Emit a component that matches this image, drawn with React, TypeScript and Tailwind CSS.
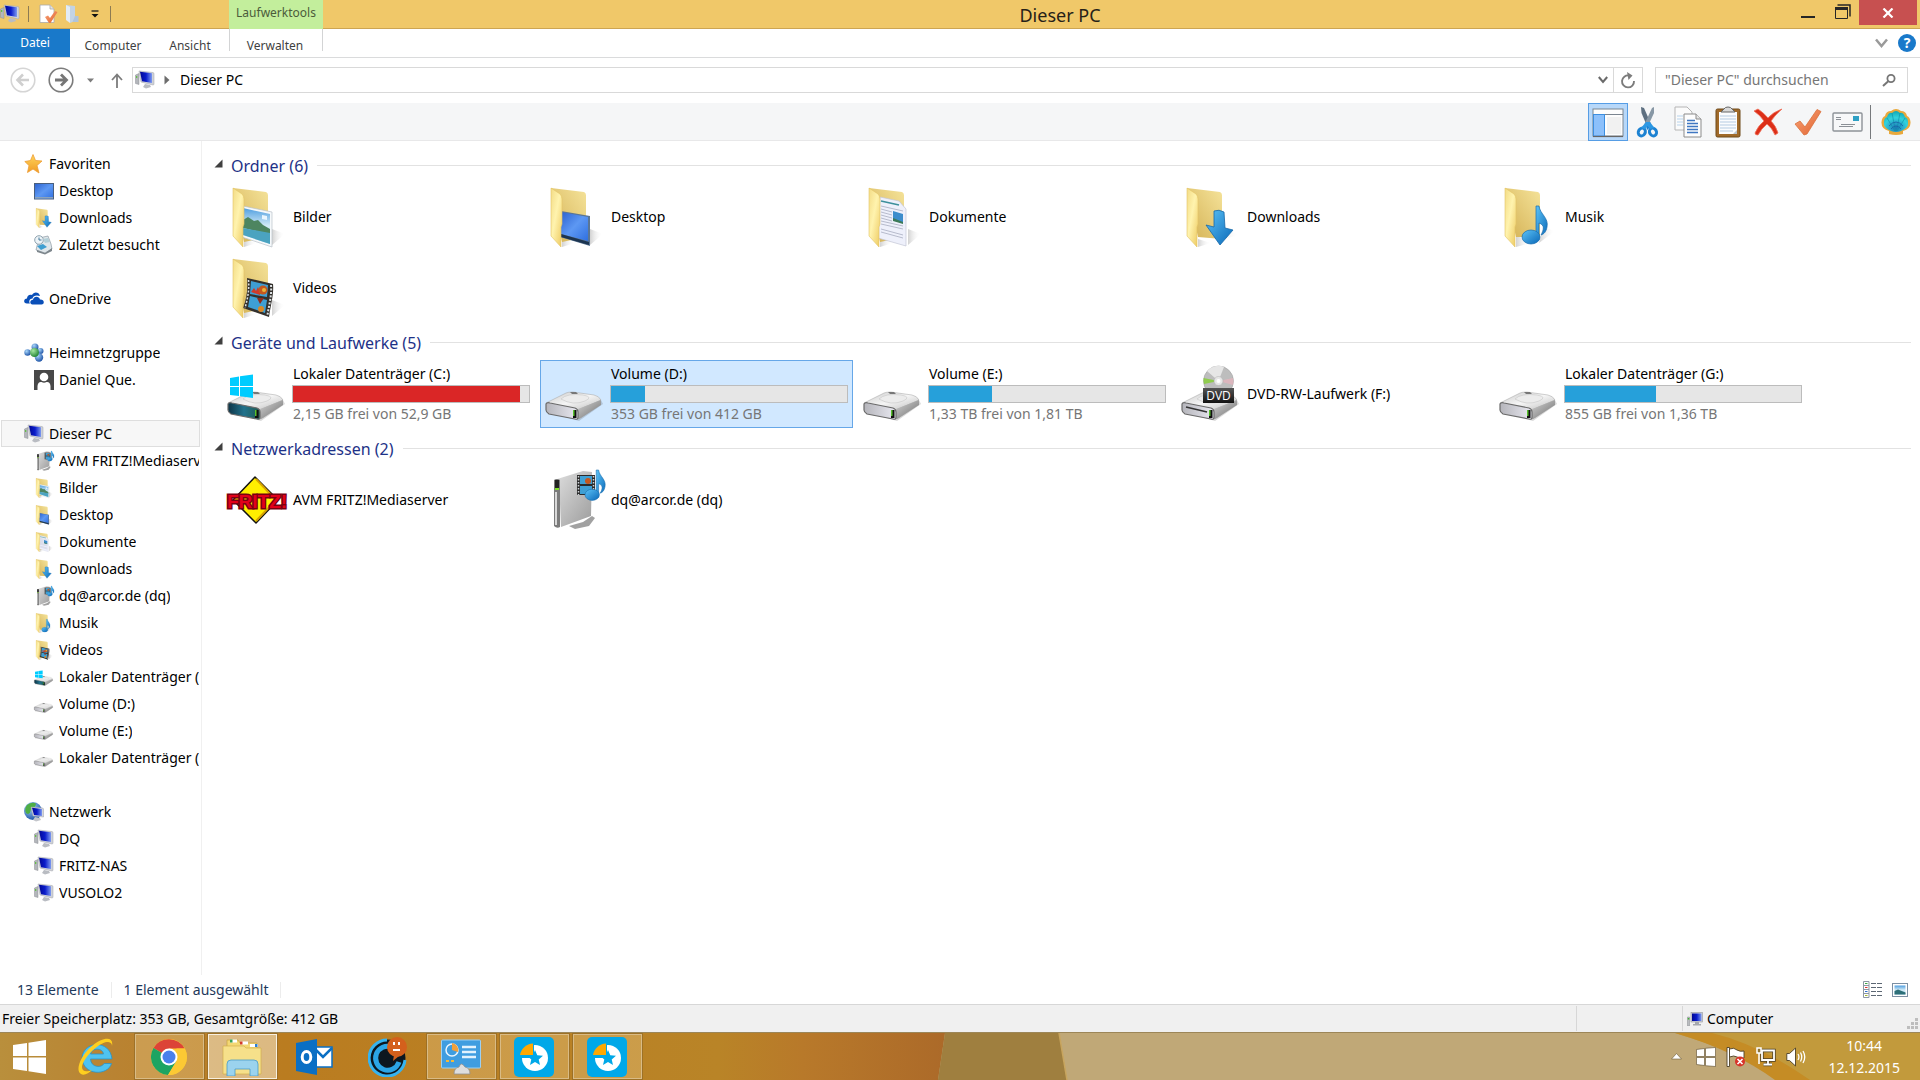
import type { ComponentType, ReactNode } from "react";

interface IconProps {
  size?: number;
}

interface NavEntry {
  label: string;
  icon: ComponentType<IconProps>;
  active?: boolean;
}

interface NavGroup extends NavEntry {
  children: NavEntry[];
}

interface FileEntry {
  label: string;
  icon: ComponentType<IconProps>;
  info?: string;
  used?: number;
  full?: boolean;
  selected?: boolean;
}

function Svg({ size = 60, box = 60, children }: { size?: number; box?: number; children: ReactNode }) {
  return (
    <svg width={size} height={size} viewBox={`0 0 ${box} ${box}`} className="shrink-0 overflow-visible" aria-hidden="true">
      {children}
    </svg>
  );
}

// Gradients shared by all icons
function IconDefs() {
  return (
    <svg width="0" height="0" className="absolute" aria-hidden="true">
      <defs>
        <linearGradient id="flap" x1="0" y1="0" x2="1" y2="1">
          <stop offset="0" stopColor="#f3dc86" />
          <stop offset="0.45" stopColor="#fff3ae" />
          <stop offset="1" stopColor="#edc95f" />
        </linearGradient>
        <linearGradient id="back" x1="1" y1="0" x2="0" y2="1">
          <stop offset="0" stopColor="#f5e39a" />
          <stop offset="1" stopColor="#d3b052" />
        </linearGradient>
        <linearGradient id="shade" x1="0" y1="0" x2="1" y2="0">
          <stop offset="0" stopColor="#9a9a9a" stopOpacity="0.45" />
          <stop offset="1" stopColor="#fff" stopOpacity="0" />
        </linearGradient>
        <linearGradient id="sky" x1="0" y1="0" x2="0" y2="1">
          <stop offset="0" stopColor="#4f9ee0" />
          <stop offset="0.5" stopColor="#d4ecf7" />
          <stop offset="1" stopColor="#a9d6ee" />
        </linearGradient>
        <linearGradient id="screen" x1="0" y1="0" x2="1" y2="1">
          <stop offset="0" stopColor="#2c62cf" />
          <stop offset="0.5" stopColor="#5d98f3" />
          <stop offset="1" stopColor="#2f6fe0" />
        </linearGradient>
        <linearGradient id="blue" x1="0" y1="0" x2="1" y2="1">
          <stop offset="0" stopColor="#5cc3f7" />
          <stop offset="1" stopColor="#0a68b8" />
        </linearGradient>
        <linearGradient id="top" x1="0" y1="0" x2="1" y2="1">
          <stop offset="0" stopColor="#c9c9c9" />
          <stop offset="0.5" stopColor="#f5f5f5" />
          <stop offset="1" stopColor="#bdbdbd" />
        </linearGradient>
        <linearGradient id="side" x1="0" y1="0" x2="1" y2="1">
          <stop offset="0" stopColor="#d8d8d8" />
          <stop offset="1" stopColor="#6e6e6e" />
        </linearGradient>
        <linearGradient id="front" x1="0" y1="0" x2="1" y2="0">
          <stop offset="0" stopColor="#b5b5bb" />
          <stop offset="1" stopColor="#e9e9f1" />
        </linearGradient>
        <linearGradient id="teal" x1="0" y1="0" x2="1" y2="0">
          <stop offset="0" stopColor="#0d3346" />
          <stop offset="0.5" stopColor="#21728c" />
          <stop offset="1" stopColor="#1e5b50" />
        </linearGradient>
        <linearGradient id="navy" x1="0" y1="0" x2="1" y2="0">
          <stop offset="0" stopColor="#020894" />
          <stop offset="0.5" stopColor="#0a1ccb" />
          <stop offset="1" stopColor="#7d9af0" />
        </linearGradient>
        <linearGradient id="black" x1="0" y1="0" x2="0" y2="1">
          <stop offset="0" stopColor="#555" />
          <stop offset="1" stopColor="#111" />
        </linearGradient>
        <linearGradient id="orange" x1="0" y1="0" x2="1" y2="1">
          <stop offset="0" stopColor="#f9a57a" />
          <stop offset="1" stopColor="#e0622e" />
        </linearGradient>
        <linearGradient id="gold" x1="0" y1="0" x2="0" y2="1">
          <stop offset="0" stopColor="#ffd65c" />
          <stop offset="1" stopColor="#f09a24" />
        </linearGradient>
        <linearGradient id="tower" x1="0" y1="0" x2="1" y2="1">
          <stop offset="0" stopColor="#e0e0e0" />
          <stop offset="1" stopColor="#9c9c9c" />
        </linearGradient>
        <radialGradient id="globe" cx="0.35" cy="0.3" r="0.8">
          <stop offset="0" stopColor="#a9d7fb" />
          <stop offset="1" stopColor="#12489f" />
        </radialGradient>
        <radialGradient id="green" cx="0.35" cy="0.3" r="0.8">
          <stop offset="0" stopColor="#a6e8a2" />
          <stop offset="1" stopColor="#167c2b" />
        </radialGradient>
        <radialGradient id="shell" cx="0.5" cy="0.8" r="0.8">
          <stop offset="0" stopColor="#1d77b8" />
          <stop offset="0.6" stopColor="#32d3dc" />
          <stop offset="1" stopColor="#0fa6b4" />
        </radialGradient>
        <linearGradient id="taskLeft" x1="0" y1="0" x2="1" y2="0">
          <stop offset="0" stopColor="#b98f3c" />
          <stop offset="0.12" stopColor="#b98332" />
          <stop offset="0.3" stopColor="#ba7c20" />
          <stop offset="0.76" stopColor="#b98427" />
          <stop offset="0.85" stopColor="#b8792a" />
          <stop offset="1" stopColor="#ac6a29" />
        </linearGradient>
      </defs>
    </svg>
  );
}

function FolderBase({ size, children }: { size?: number; children?: ReactNode }) {
  return (
    <Svg size={size}>
      <path d="M45 58 L58 47 L45 42Z" fill="url(#shade)" />
      <path d="M17 52 L30 56 L17 60Z" fill="url(#shade)" />
      <path d="M6 1 L39 5 Q41 6 41 8 V50 L17 55Z" fill="url(#back)" />
      {children}
      <path d="M6 1 L15 7 Q17 9 17 12 V37 L16 40 V60 L6 49Z" fill="url(#flap)" stroke="#e3c464" strokeWidth="0.6" />
    </Svg>
  );
}

function PicturesIcon({ size }: IconProps) {
  return (
    <FolderBase size={size}>
      <path d="M16 19 L45 25 V60 L15 50Z" fill="#f6f9fb" stroke="#b9c2c8" strokeWidth="0.7" />
      <path d="M16 21 L43 27 V57 L16 48Z" fill="url(#sky)" />
      <path d="M16 33 L21 30 L27 34 L31 33 L36 38 L43 42 V47 L16 41Z" fill="#4d8560" />
      <path d="M16 41 L43 46 V57 L16 48Z" fill="#4ba3c0" />
      <path d="M35 28 l5 1 v4 l-5 -1z" fill="#e9f6ff" />
    </FolderBase>
  );
}

function DesktopFolderIcon({ size }: IconProps) {
  return (
    <FolderBase size={size}>
      <path d="M16 24 L45 29 V59 L15 50Z" fill="#5b7694" />
      <path d="M16 25 L43 30 V54 L16 47Z" fill="url(#screen)" />
      <path d="M16 47 L44 55 V58 L16 50Z" fill="#1c3450" />
    </FolderBase>
  );
}

function DocumentsIcon({ size }: IconProps) {
  return (
    <FolderBase size={size}>
      <path d="M17 10 L36 14 L43 22 V59 L15 51Z" fill="#eef0fb" stroke="#c3c6d6" strokeWidth="0.7" />
      <path d="M18 14 L36 18" stroke="#3c8f9b" strokeWidth="1.6" />
      <path
        d="M18 19l22 5M18 22l11 3M18 25l11 3M18 28l11 3M18 31l11 3M18 34l22 5M18 37l22 5M18 42l22 6M18 45l22 6"
        stroke="#b0b4c6"
        strokeWidth="0.9"
      />
      <path d="M30 24 l10 3 v9 l-10 -3z" fill="#3d8dcc" />
      <path d="M30 31 l10 4 v2 l-10 -3z" fill="#3d7a58" />
    </FolderBase>
  );
}

function DownloadsIcon({ size }: IconProps) {
  return (
    <Svg size={size}>
      <path d="M36 54 L58 48 L45 42Z" fill="url(#shade)" />
      <path d="M17 52 L30 56 L17 60Z" fill="url(#shade)" />
      <path d="M6 1 L39 5 Q41 6 41 8 V52 L17 50Z" fill="url(#back)" />
      <path d="M6 1 L15 7 Q17 9 17 12 V37 L16 40 V60 L6 49Z" fill="url(#flap)" stroke="#e3c464" strokeWidth="0.6" />
      <path d="M33 24 Q38 22 43 25 L44 41 L52 43 L39 58 L25 38 L33 40Z" fill="url(#blue)" stroke="#1668a8" strokeWidth="0.8" />
    </Svg>
  );
}

function Note({ x = 0, y = 0 }: { x?: number; y?: number }) {
  return (
    <g transform={`translate(${x} ${y})`}>
      <path d="M14 0 H17 C18 8 27 12 25 21 C24 26 22 28 19 29 C22 24 23 19 17 17 V34 H14Z" fill="url(#blue)" stroke="#176bad" strokeWidth="0.7" />
      <ellipse cx="9" cy="31" rx="9" ry="7" fill="url(#blue)" stroke="#176bad" strokeWidth="0.7" />
    </g>
  );
}

function MusicIcon({ size }: IconProps) {
  return (
    <Svg size={size}>
      <path d="M40 56 L56 44 L44 40Z" fill="url(#shade)" />
      <path d="M17 48 L32 56 L17 60Z" fill="url(#shade)" />
      <path d="M6 1 L39 5 Q41 6 41 8 V50 L17 50Z" fill="url(#back)" />
      <path d="M6 1 L15 7 Q17 9 17 12 V37 L16 40 V60 L6 49Z" fill="url(#flap)" stroke="#e3c464" strokeWidth="0.6" />
      <Note x={23} y={19} />
    </Svg>
  );
}

function Film() {
  return (
    <>
      <path d="M20 20 L46 26 C47 36 44 46 42 59 L16 50 C20 40 21 30 20 20Z" fill="#33302c" />
      <path d="M24 23 L41 27 L40 39 L23 36Z" fill="#3e9fd4" />
      <path d="M23 38 L40 42 L38 55 L21 49Z" fill="#3e9fd4" />
      <path d="M24 34 l3 -4 2 3 2 -4 2 5 v3z" fill="#cf3a2b" />
      <circle cx="36" cy="32" r="4.5" fill="#c5571e" />
      <circle cx="37" cy="32" r="2" fill="#e9b53a" />
      <path d="M30 40 h7 l-4 6z" fill="#8c2c1c" />
      <circle cx="34" cy="51" r="3" fill="#d98826" />
      <path d="M44 27 C45 37 42 47 40.5 57" stroke="#dfe3e6" strokeWidth="2" strokeDasharray="2 1.5" fill="none" />
      <path d="M21.5 22 C22.5 32 20.5 41 18 50" stroke="#dfe3e6" strokeWidth="1.5" strokeDasharray="2 1.5" fill="none" />
    </>
  );
}

function VideosIcon({ size }: IconProps) {
  return (
    <FolderBase size={size}>
      <Film />
    </FolderBase>
  );
}

function DriveBody({ front = "url(#front)" }: { front?: string }) {
  return (
    <>
      <path d="M6 49 L34 57 L58 40 L56 36Z" fill="#000" opacity="0.15" />
      <path d="M1 39 L21 29 Q23 28 28 28 L49 31 Q54 32 56 36 L33 46 L2 41Z" fill="url(#top)" stroke="#a2a2a2" strokeWidth="0.5" />
      <path d="M16 35 Q22 29 38 31 Q49 33 40 37 Q28 42 16 35Z" fill="#ececec" stroke="#bfbfbf" strokeWidth="0.5" />
      <path d="M25 28 l6 0 2 2 -6 0z" fill="#777" />
      <path d="M33 45 L56 36 V41 L36 54 Q33 56 31 55Z" fill="url(#side)" />
      <path d="M1 40 Q2 38 5 39 L30 44 Q33 45 33 48 V53 Q33 56 30 55 L4 50 Q1 48 1 46Z" fill={front} stroke="#6b6b6b" strokeWidth="1.2" />
      <rect x="28" y="46" width="3.5" height="8" fill="#111" />
      <rect x="28" y="46" width="1.5" height="6" fill="#58c22c" />
    </>
  );
}

function DriveIcon({ size }: IconProps) {
  return (
    <Svg size={size}>
      <DriveBody />
    </Svg>
  );
}

function SystemDriveIcon({ size }: IconProps) {
  return (
    <Svg size={size}>
      <DriveBody front="url(#teal)" />
      <path d="M3 14 L12 12.500 V22 H3Z M13 12.300 L26 10.500 V22 H13Z M3 23 H12 V32 L3 31Z M13 23 H26 V34 L13 32.300Z" fill="#00ccff" />
    </Svg>
  );
}

function DvdIcon({ size }: IconProps) {
  return (
    <Svg size={size}>
      <DriveBody />
      <path d="M5 43 L26 48" stroke="#333" strokeWidth="1.5" />
      <circle cx="37.5" cy="17" r="15" fill="#bdbdbd" stroke="#999" strokeWidth="0.5" />
      <path d="M37.5 17 L26 7 A15 15 0 0 1 43 3Z" fill="#e6e6e6" />
      <path d="M37.5 17 L23 20 A15 15 0 0 1 22.500 14Z" fill="#7ed321" opacity="0.7" />
      <path d="M37.5 17 L52 14 A15 15 0 0 1 52 21Z" fill="#e8b3bd" opacity="0.7" />
      <circle cx="37.5" cy="17" r="4.5" fill="#e6e6e6" stroke="#aaa" strokeWidth="0.5" />
      <circle cx="37.5" cy="17" r="2" fill="#fff" />
      <rect x="22" y="24" width="31" height="15" fill="url(#black)" />
      <text x="37.5" y="36" textAnchor="middle" fontSize="12" fill="#fff" fontFamily="Open Sans, sans-serif">
        DVD
      </text>
    </Svg>
  );
}

function FritzIcon({ size }: IconProps) {
  return (
    <Svg size={size}>
      <path d="M28 7 L51 30 L29 53 L6 30Z" fill="#ffee00" stroke="#111" strokeWidth="1.5" strokeLinejoin="round" />
      <path d="M29 9 L49 30 L29 51" fill="none" stroke="#d8a400" strokeWidth="2" />
      <text
        x="30"
        y="38"
        textAnchor="middle"
        fontSize="19"
        fontWeight="700"
        fill="#e2001a"
        stroke="#7a0010"
        strokeWidth="3"
        paintOrder="stroke"
        fontFamily="Liberation Sans, sans-serif"
      >
        FRITZ!
      </text>
    </Svg>
  );
}

function MediaServerIcon({ size }: IconProps) {
  return (
    <Svg size={size}>
      <path d="M24 56 L38 52 L47 46 L50 48 L44 56 L30 59Z" fill="#8a8a8a" opacity="0.8" />
      <path d="M9 10 L38 1 L47 2 L46 46 L16 57 L14 10Z" fill="url(#tower)" />
      <path d="M9 10 Q12 8 15 10 V57 Q12 59 9 56Z" fill="#7b7b7b" />
      <path d="M11 22 V55" stroke="#d9d9d9" strokeWidth="2" />
      <rect x="10" y="10" width="4" height="8" fill="#222" />
      <rect x="10" y="18" width="4" height="2" fill="#7ee02a" />
      <rect x="32" y="5" width="18" height="20" fill="#2b2b2b" />
      <rect x="35" y="6" width="12" height="8" fill="#3e9fd4" />
      <rect x="35" y="16" width="12" height="8" fill="#3e9fd4" />
      <circle cx="43" cy="11" r="3" fill="#c5571e" />
      <path d="M33.5 6 V25 M48.5 6 V25" stroke="#cfd4d8" strokeWidth="1.5" strokeDasharray="1.5 1.5" />
      <g transform="translate(40 0) scale(0.8)">
        <Note />
      </g>
    </Svg>
  );
}

function ComputerIcon({ size = 20 }: IconProps) {
  return (
    <Svg size={size} box={20}>
      <path d="M0.500 5 L4 3.500 V14.500 L0.500 13.500Z" fill="#b3b6bb" stroke="#8d8f94" strokeWidth="0.5" />
      <rect x="1.200" y="6" width="1" height="2" fill="#53c02c" />
      <path d="M4 1 L18 2.500 Q19 2.500 19 4 V14 Q19 15 18 15 L6 12Z" fill="#cfd2d8" stroke="#9ea1a8" strokeWidth="0.5" />
      <path d="M5 1.800 L17 3.300 V13 L7 11.300Z" fill="url(#navy)" />
      <path d="M10 14 L15 15 L16 17 L11 18.500 L8 17Z" fill="#b9bcc2" />
    </Svg>
  );
}

function StarIcon({ size = 20 }: IconProps) {
  return (
    <Svg size={size} box={20}>
      <path d="M9 0.500 L11.500 6.500 L18 7 L13 11.500 L15 19 L9 15 L3.500 18.500 L5 11.500 L0.800 7.500 L6.500 6.500Z" fill="url(#gold)" stroke="#ee9d35" strokeWidth="0.8" />
    </Svg>
  );
}

function DesktopIcon({ size = 20 }: IconProps) {
  return (
    <Svg size={size} box={20}>
      <rect x="0.5" y="2.5" width="19" height="15.5" fill="url(#screen)" stroke="#4a5f7e" />
      <rect x="1" y="16" width="18" height="1.5" fill="#8aa3bd" />
    </Svg>
  );
}

function RecentIcon({ size = 20 }: IconProps) {
  return (
    <Svg size={size} box={20}>
      <path d="M5 3 L14 1 L17 9 L18 14 L11 18 L2 15Z" fill="#dfe6ea" stroke="#8d9aa3" strokeWidth="0.7" />
      <circle cx="5" cy="5" r="4.3" fill="#edf4f8" stroke="#8fa3b0" />
      <path d="M5 2.500 V5 H7.500" stroke="#44789b" fill="none" />
      <path d="M9 4 l5 -1 2 4 -5 1z" fill="#b3cfd8" />
      <path d="M3 11 l6 -2 4 3 -6 3z" fill="#3f9ed0" />
      <path d="M3 15 L11 18 L18 13 L18 16 L11 19.500 L3 17Z" fill="#7d868c" />
    </Svg>
  );
}

function OneDriveIcon({ size = 20 }: IconProps) {
  return (
    <Svg size={size} box={20}>
      <path d="M6 14.500 H3 C-1 14.500 -0.500 9.500 3 9.500 C3 6 6 5 8 6 C9.500 2.500 15 2.500 16 7 C12 5.500 9 7 8.500 9.500 C5.500 9.500 4.500 12.500 6 14.500Z" fill="#0a4fb8" />
      <path d="M8.500 15.500 C5.500 15.500 5.500 10.800 9 10.800 C9.500 7 15 6.500 16 10.500 C20.500 10 21 15.500 17.500 15.500Z" fill="#0a4fb8" />
    </Svg>
  );
}

function HomegroupIcon({ size = 20 }: IconProps) {
  return (
    <Svg size={size} box={20}>
      <circle cx="3.5" cy="9.5" r="3.2" fill="url(#globe)" />
      <circle cx="11" cy="4" r="3.5" fill="url(#globe)" />
      <circle cx="16.5" cy="8" r="3" fill="url(#globe)" />
      <circle cx="15" cy="14.5" r="4.2" fill="url(#globe)" />
      <circle cx="10.5" cy="9.5" r="4.5" fill="url(#green)" />
    </Svg>
  );
}

function UserIcon({ size = 20 }: IconProps) {
  return (
    <Svg size={size} box={20}>
      <rect width="20" height="20" fill="#484848" />
      <circle cx="10" cy="7" r="4.3" fill="#fff" />
      <path d="M3.500 20 V16 Q4 11.500 7.500 12 Q10 13.500 12.500 12 Q16 11.500 16.500 16 V20Z" fill="#fff" />
    </Svg>
  );
}

function NetworkIcon({ size = 20 }: IconProps) {
  return (
    <Svg size={size} box={20}>
      <circle cx="9" cy="9" r="9" fill="url(#globe)" />
      <path d="M3 3 Q8 -0.500 12 1.500 Q12 5 7 7 Q6 14 2 11 Q0 7 3 3Z" fill="#4fae45" />
      <path d="M7 5 L18 6 Q19.500 6 19.500 7 V15 L9 14Z" fill="#d6d8dd" stroke="#9ea1a8" strokeWidth="0.5" />
      <path d="M8 5.800 L18 7 V14 L10 13Z" fill="url(#navy)" />
      <path d="M11 15 L16 16 L17 18 L12 19.500 L9 18Z" fill="#c3c5ca" />
    </Svg>
  );
}

const NAV: NavGroup[] = [
  {
    label: "Favoriten",
    icon: StarIcon,
    children: [
      { label: "Desktop", icon: DesktopIcon },
      { label: "Downloads", icon: DownloadsIcon },
      { label: "Zuletzt besucht", icon: RecentIcon },
    ],
  },
  { label: "OneDrive", icon: OneDriveIcon, children: [] },
  {
    label: "Heimnetzgruppe",
    icon: HomegroupIcon,
    children: [{ label: "Daniel Que.", icon: UserIcon }],
  },
  {
    label: "Dieser PC",
    icon: ComputerIcon,
    active: true,
    children: [
      { label: "AVM FRITZ!Mediaserver", icon: MediaServerIcon },
      { label: "Bilder", icon: PicturesIcon },
      { label: "Desktop", icon: DesktopFolderIcon },
      { label: "Dokumente", icon: DocumentsIcon },
      { label: "Downloads", icon: DownloadsIcon },
      { label: "dq@arcor.de (dq)", icon: MediaServerIcon },
      { label: "Musik", icon: MusicIcon },
      { label: "Videos", icon: VideosIcon },
      { label: "Lokaler Datenträger (C:)", icon: SystemDriveIcon },
      { label: "Volume (D:)", icon: DriveIcon },
      { label: "Volume (E:)", icon: DriveIcon },
      { label: "Lokaler Datenträger (G:)", icon: DriveIcon },
    ],
  },
  {
    label: "Netzwerk",
    icon: NetworkIcon,
    children: [
      { label: "DQ", icon: ComputerIcon },
      { label: "FRITZ-NAS", icon: ComputerIcon },
      { label: "VUSOLO2", icon: ComputerIcon },
    ],
  },
];

const SECTIONS: { title: string; items: FileEntry[] }[] = [
  {
    title: "Ordner",
    items: [
      { label: "Bilder", icon: PicturesIcon },
      { label: "Desktop", icon: DesktopFolderIcon },
      { label: "Dokumente", icon: DocumentsIcon },
      { label: "Downloads", icon: DownloadsIcon },
      { label: "Musik", icon: MusicIcon },
      { label: "Videos", icon: VideosIcon },
    ],
  },
  {
    title: "Geräte und Laufwerke",
    items: [
      { label: "Lokaler Datenträger (C:)", icon: SystemDriveIcon, info: "2,15 GB frei von 52,9 GB", used: 96, full: true },
      { label: "Volume (D:)", icon: DriveIcon, info: "353 GB frei von 412 GB", used: 14.3, selected: true },
      { label: "Volume (E:)", icon: DriveIcon, info: "1,33 TB frei von 1,81 TB", used: 26.5 },
      { label: "DVD-RW-Laufwerk (F:)", icon: DvdIcon },
      { label: "Lokaler Datenträger (G:)", icon: DriveIcon, info: "855 GB frei von 1,36 TB", used: 38.6 },
    ],
  },
  {
    title: "Netzwerkadressen",
    items: [
      { label: "AVM FRITZ!Mediaserver", icon: FritzIcon },
      { label: "dq@arcor.de (dq)", icon: MediaServerIcon },
    ],
  },
];

function TitleBar() {
  return (
    <header className="flex h-[29px] border-b border-[#cda552] bg-[#f0c869]">
      <div className="flex w-[229px] items-center">
        <ComputerIcon />
        <span className="ml-2 h-4 w-px bg-[#8d7b52]" />
        <button aria-label="Eigenschaften" className="ml-[10px]">
          <Svg size={20} box={20}>
            <path d="M1 1 H11 L15 5 V18.500 H1Z" fill="#fff" stroke="#a9a9a9" strokeWidth="0.8" />
            <path d="M11 1 V5 H15" fill="#e4e4e4" stroke="#a9a9a9" strokeWidth="0.8" />
            <path d="M6 13 L9 11.500 L11 14 L16 7 L18.500 8 L11.500 19 H10Z" fill="url(#orange)" />
          </Svg>
        </button>
        <button aria-label="Neuer Ordner" className="ml-[6px]">
          <Svg size={20} box={20}>
            <path d="M1 1 L10 2 V17 L5 19Z" fill="#c3d3e4" />
            <path d="M1 1 L5 3 V19 L1 16Z" fill="#e2ecf6" />
            <path d="M10 12 h3.500 v6 h-6z" fill="#b1c4d9" />
          </Svg>
        </button>
        <button aria-label="Symbolleiste anpassen" className="ml-[6px]">
          <svg width="8" height="8" viewBox="0 0 8 8">
            <path d="M0.500 1 H7.500" stroke="#111" strokeWidth="1.2" />
            <path d="M0.500 4 H7.500 L4 7.500Z" fill="#111" />
          </svg>
        </button>
        <span className="ml-[11px] h-4 w-px bg-[#8d7b52]" />
      </div>
      <div className="h-[29px] w-[94px] bg-[#c3ee9c] text-center text-xs leading-[25px] text-[#4b5c3b]">Laufwerktools</div>
      <h1 className="flex-1 text-center text-lg leading-[30px] text-[#262118]">Dieser PC</h1>
      <div className="flex pr-[3px]">
        <button aria-label="Minimieren" className="flex w-[30px] justify-start pt-4 pl-1">
          <span className="block h-[2px] w-[14px] bg-[#262626]" />
        </button>
        <button aria-label="Verkleinern" className="flex w-8 justify-center pt-1">
          <svg width="16" height="16" viewBox="0 0 16 16">
            <path d="M2.500 1 H15 V12.500" fill="none" stroke="#262626" strokeWidth="1.5" />
            <path d="M0.500 4 H12.500 V14.500 H0.500Z" fill="none" stroke="#262626" />
            <path d="M0 4.500 H13" stroke="#262626" strokeWidth="3" />
          </svg>
        </button>
        <button aria-label="Schließen" className="flex h-[25px] w-[58px] items-center justify-center bg-[#c75050]">
          <svg width="12" height="10" viewBox="0 0 12 10">
            <path d="M1.500 0.500 L10.500 9.500 M10.500 0.500 L1.500 9.500" stroke="#fff" strokeWidth="2.2" />
          </svg>
        </button>
      </div>
    </header>
  );
}

function Ribbon() {
  return (
    <nav className="flex h-[29px] border-b border-[#dadbdc] text-xs text-[#3f3f3f]">
      <button className="w-[70px] bg-[#1979ca] text-white">Datei</button>
      <button className="w-[86px] pt-[5px]">Computer</button>
      <button className="w-[68px] pt-[5px]">Ansicht</button>
      <div className="ml-[5px] flex h-[22px] w-[94px] border-x border-[#d3d4d5]">
        <button className="h-[29px] w-full pt-[5px] pr-[2px]">Verwalten</button>
      </div>
      <div className="ml-auto flex items-center gap-[10px] pr-1">
        <button aria-label="Menüband erweitern">
          <svg width="13" height="10" viewBox="0 0 13 10">
            <path d="M1 1.500 L6.500 8 L12 1.500" fill="none" stroke="#9a9a9a" strokeWidth="2.5" />
          </svg>
        </button>
        <button aria-label="Hilfe" className="h-[18px] w-[18px] rounded-full bg-[#1979ca] text-sm leading-[18px] font-bold text-white">
          ?
        </button>
      </div>
    </nav>
  );
}

function AddressRow() {
  return (
    <div className="flex h-[45px] items-center pr-3 pb-px pl-[10px]">
      <button aria-label="Zurück">
        <svg width="26" height="26" viewBox="0 0 26 26">
          <circle cx="13" cy="13" r="11.8" fill="none" stroke="#d5d5d5" strokeWidth="1.6" />
          <path d="M19 13 H8 M13 7.500 L7.500 13 L13 18.500" fill="none" stroke="#cfcfcf" strokeWidth="2.6" />
        </svg>
      </button>
      <button aria-label="Vorwärts" className="ml-3">
        <svg width="26" height="26" viewBox="0 0 26 26">
          <circle cx="13" cy="13" r="11.8" fill="none" stroke="#7c7c7c" strokeWidth="1.6" />
          <path d="M7 13 H18 M13 7.500 L18.500 13 L13 18.500" fill="none" stroke="#767676" strokeWidth="2.8" />
        </svg>
      </button>
      <button aria-label="Zuletzt besuchte Orte" className="ml-3">
        <svg width="9" height="5" viewBox="0 0 9 5">
          <path d="M1 0.500 H8 L4.500 4.500Z" fill="#7c7c7c" />
        </svg>
      </button>
      <button aria-label="Nach oben" className="ml-4">
        <svg width="12" height="15" viewBox="0 0 12 15">
          <path d="M6 15 V2 M1 7 L6 1.500 L11 7" fill="none" stroke="#7c7c7c" strokeWidth="1.8" />
        </svg>
      </button>
      <div className="ml-[9px] flex h-[26px] flex-1 items-center border border-[#d9d9d9] pl-[2px]">
        <ComputerIcon />
        <svg width="6" height="10" viewBox="0 0 6 10" className="ml-[9px]">
          <path d="M0.500 0.500 L5.500 5 L0.500 9.500Z" fill="#6d6d6d" />
        </svg>
        <a href="#pc" className="ml-[10px] text-sm leading-5">
          Dieser PC
        </a>
        <button aria-label="Vorherige Orte" className="mr-[5px] ml-auto">
          <svg width="10" height="8" viewBox="0 0 10 8">
            <path d="M0.800 1 L5 6 L9.200 1" fill="none" stroke="#6a6a6a" strokeWidth="2" />
          </svg>
        </button>
        <button aria-label="Aktualisieren" className="flex h-6 w-[29px] items-center justify-center border-l border-[#d9d9d9]">
          <svg width="16" height="17" viewBox="0 0 16 17">
            <path d="M9 3.500 A6 6 0 1 0 14 9" fill="none" stroke="#7c7c7c" strokeWidth="1.9" />
            <path d="M7 0 L12.500 3.500 L8.500 8Z" fill="#7c7c7c" />
          </svg>
        </button>
      </div>
      <label className="ml-3 flex h-[26px] w-[253px] items-center border border-[#d9d9d9] pr-[11px] pl-[9px]">
        <input
          type="text"
          aria-label="Dieser PC durchsuchen"
          placeholder={'"Dieser PC" durchsuchen'}
          className="min-w-0 flex-1 text-sm leading-5 outline-none placeholder:text-[#767676]"
        />
        <svg width="14" height="13" viewBox="0 0 14 13">
          <circle cx="9" cy="4.5" r="3.6" fill="none" stroke="#767676" strokeWidth="1.8" />
          <path d="M6.500 7 L1 12" stroke="#767676" strokeWidth="2" />
        </svg>
      </label>
    </div>
  );
}

function ToolButton({ label, children }: { label: string; children: ReactNode }) {
  return (
    <button aria-label={label} className="flex h-[37px] w-10 items-center justify-center">
      {children}
    </button>
  );
}

function ToolBar() {
  return (
    <div className="flex h-[38px] justify-end border-b border-[#e8e8e9] bg-[#f5f6f7]">
      <button aria-label="Navigationsbereich" className="flex h-[38px] w-10 items-center justify-center border border-[#569de5] bg-[#b8d8f9] pt-[2px]">
        <svg width="32" height="30" viewBox="0 0 32 30">
          <rect x="1" y="1" width="30" height="27" fill="#fdfdfd" stroke="#7b8590" />
          <path d="M1 6.500 H31" stroke="#7b8590" />
          <rect x="1.5" y="6.5" width="11" height="21.5" fill="#8cc0fb" stroke="#3c8ee0" />
          <rect x="15" y="9" width="14" height="17" fill="#f1f1f1" />
          <path d="M1 28.500 H31" stroke="#666" strokeWidth="1.2" />
        </svg>
      </button>
      <ToolButton label="Ausschneiden">
        <svg width="24" height="32" viewBox="0 0 24 32">
          <path d="M5 1 L8 2 L15 18 L11 20 L5.500 7Z" fill="#5d6f80" />
          <path d="M18 1 L16 2 L8.500 18 L12 20 L18 7Z" fill="#8797a5" />
          <path d="M10 20 L14 17 L15.500 20 L11 24Z" fill="#1b7fd0" />
          <ellipse cx="5.8" cy="26" rx="3.4" ry="4" fill="none" stroke="#1c82d2" strokeWidth="3" transform="rotate(30 5.8 26)" />
          <ellipse cx="17" cy="26" rx="3.4" ry="4" fill="none" stroke="#1c82d2" strokeWidth="3" transform="rotate(-30 17 26)" />
          <path d="M5 22 L10 16 L14 16 L18.500 22 L14 23 L11.500 20 L9 23Z" fill="#2b97e3" />
        </svg>
      </ToolButton>
      <ToolButton label="Kopieren">
        <svg width="28" height="32" viewBox="0 0 28 32">
          <path d="M1 1 H13 L18 6 V24 H1Z" fill="#fbfbfb" stroke="#b5b5b5" />
          <path d="M3 10h6M3 13h6M3 16h6M3 19h6" stroke="#b7d3ec" />
          <path d="M10 8 H22 L27 13 V31 H10Z" fill="#fdfdfd" stroke="#8b8b8b" />
          <path d="M22 8 V13 H27" fill="#e5e5e5" stroke="#8b8b8b" />
          <path d="M13 14.500h8M13 17.500h11M13 20.500h11M13 23.500h11M13 26.500h11" stroke="#3f77c2" strokeWidth="1.3" />
        </svg>
      </ToolButton>
      <ToolButton label="Einfügen">
        <svg width="26" height="32" viewBox="0 0 26 32">
          <rect x="1" y="3" width="24" height="28" rx="1.5" fill="#a06a2a" stroke="#6f4a1b" />
          <path d="M4 6 H22 V28 H4Z" fill="#fbfcfe" />
          <path d="M18 28 L22 24 V28Z" fill="#b9c3cc" />
          <path d="M5 10h16M5 13h16M5 16h16M5 19h16M5 22h16M5 25h13" stroke="#b5cbe2" />
          <path d="M6 6 L9 3 Q10 1 13 1 Q16 1 17 3 L20 6Z" fill="#d9d9d9" stroke="#666" />
        </svg>
      </ToolButton>
      <ToolButton label="Löschen">
        <svg width="30" height="28" viewBox="0 0 30 28">
          <path d="M1 3 L5 1 Q11 5 15 10 Q20 4 29 1 Q22 7 18 13 Q23 18 25 25 L22 27 Q19 20 14 16 Q8 21 5 27 Q2 27 2 25 Q5 18 11 13 Q7 7 1 3Z" fill="#dc2f18" stroke="#f0715a" strokeWidth="0.8" />
        </svg>
      </ToolButton>
      <ToolButton label="Eigenschaften">
        <svg width="28" height="28" viewBox="0 0 28 28">
          <path d="M1 16 L6 13 L11 19 L23 1.500 L27 3.500 L13 26 L10 27Z" fill="url(#orange)" stroke="#d9713c" strokeWidth="0.8" />
        </svg>
      </ToolButton>
      <ToolButton label="Senden">
        <svg width="32" height="20" viewBox="0 0 32 20">
          <rect x="1" y="1" width="29" height="18" rx="1" fill="#f7f8f9" stroke="#8d9298" strokeWidth="1.4" />
          <path d="M4 5.500h5M4 7.500h5M9 12.500h14M7 14.500h14" stroke="#8b9096" />
          <rect x="21" y="4" width="6" height="5" fill="#2ea0c4" />
        </svg>
      </ToolButton>
      <span className="mt-[2px] ml-[2px] h-[34px] w-px bg-[#76797c]" />
      <button aria-label="Classic Shell" className="flex w-[49px] items-center justify-center">
        <svg width="30" height="28" viewBox="0 0 30 28">
          <path
            d="M8 26 L8 23 Q0 21 0.500 14 Q1 9 4 8 Q5 3 10 3 Q15 -1 20 3 Q25 3 26 8 Q29 9 29.500 14 Q30 21 22 23 V26 Q15 28 8 26Z"
            fill="#e9a93c"
          />
          <path d="M10 23 Q2 20 3 14 Q3 10 6 9 Q8 4 11 5 Q15 1 19 5 Q22 4 24 9 Q27 10 27 14 Q28 20 20 23 Q15 25 10 23Z" fill="url(#shell)" />
          <path d="M14 23 L6 10 M14.500 23 L11 5 M15.500 23 L19 5 M16 23 L24 10" stroke="#0b8c9f" strokeWidth="0.8" opacity="0.7" />
          <path d="M8 18 Q15 10 22 18 M10 21 Q15 15 20 21" fill="none" stroke="#1a65a8" strokeWidth="0.9" />
        </svg>
      </button>
    </div>
  );
}

function NavRow({ entry, nested }: { entry: NavEntry; nested?: boolean }) {
  const Icon = entry.icon;
  return (
    <a
      href="#nav"
      className={`flex h-[27px] items-center gap-[5px] border whitespace-nowrap ${nested ? "pl-8" : "pl-[22px]"} ${
        entry.active ? "border-[#dedede] bg-[#f7f7f7]" : "border-transparent"
      }`}
    >
      <Icon size={20} />
      <span className="min-w-0 overflow-hidden">{entry.label}</span>
    </a>
  );
}

function Sidebar() {
  return (
    <aside className="flex w-[202px] shrink-0 flex-col gap-[27px] border-r border-[#f0f0f0] pt-[9px] pr-px pl-px text-sm leading-5">
      {NAV.map((group) => (
        <div key={group.label}>
          <NavRow entry={group} />
          {group.children.map((child) => (
            <NavRow key={child.label} entry={child} nested />
          ))}
        </div>
      ))}
    </aside>
  );
}

function FileTile({ item }: { item: FileEntry }) {
  const Icon = item.icon;
  return (
    <button
      className={`flex h-[68px] w-[313px] items-center gap-[5px] border px-1 text-left ${
        item.selected ? "border-[#66a7e8] bg-[#d1e8ff]" : "border-transparent"
      }`}
    >
      <Icon size={60} />
      <span className="min-w-0 flex-1">
        <span className="block pl-px">{item.label}</span>
        {item.info && (
          <>
            <span className="my-px block h-[18px] border border-[#bcbcbc] bg-[#e6e6e6]">
              <span className={`block h-full ${item.full ? "bg-[#da2626]" : "bg-[#26a0da]"}`} style={{ width: `${item.used}%` }} />
            </span>
            <span className="block pl-px text-[#767676]">{item.info}</span>
          </>
        )}
      </span>
    </button>
  );
}

function FileList() {
  return (
    <main className="flex flex-1 flex-col gap-1 pt-2 text-sm leading-5">
      {SECTIONS.map((section) => (
        <section key={section.title}>
          <h2 className="flex h-[34px] items-center pr-[9px] pb-px pl-3 text-base text-[#1e3287]">
            <svg width="9" height="9" viewBox="0 0 9 9" className="mr-2 mb-1">
              <path d="M8.500 0.500 V8.500 H0.500Z" fill="#404040" />
            </svg>
            {section.title} ({section.items.length})
            <span className="ml-[9px] h-px flex-1 bg-[#e2e2e2]" />
          </h2>
          <div className="flex flex-wrap gap-x-[5px] gap-y-[3px] pl-5">
            {section.items.map((item) => (
              <FileTile key={item.label} item={item} />
            ))}
          </div>
        </section>
      ))}
    </main>
  );
}

function StatusBars() {
  return (
    <footer className="text-sm leading-5">
      <div className="flex h-[29px] items-center pr-3 pl-[17px] text-[#1e395b]">
        <span>13 Elemente</span>
        <span className="ml-3 h-4 w-px bg-[#ececec]" />
        <span className="ml-3">1 Element ausgewählt</span>
        <span className="ml-3 h-4 w-px bg-[#ececec]" />
        <button aria-label="Details" className="ml-auto">
          <svg width="20" height="17" viewBox="0 0 20 17">
            <path d="M0.500 0.500 H6 V16.500 H0.500Z M0.500 4.500 H6 M0.500 8.500 H6 M0.500 12.500 H6" fill="#fff" stroke="#8c97a3" />
            <path d="M2 2.500 h2.500" stroke="#3fa845" />
            <path d="M2 6.500 h2.500" stroke="#d33" />
            <path d="M2 10.500 h2.500" stroke="#2b6fd0" />
            <path d="M2 14.500 h2.500" stroke="#a4b82c" />
            <path d="M8 2.500h5M14 2.500h5M8 6.500h5M14 6.500h5M8 10.500h5M14 10.500h5M8 14.500h5M14 14.500h5" stroke="#5c6773" />
          </svg>
        </button>
        <button aria-label="Große Symbole" className="ml-[9px]">
          <svg width="16" height="14" viewBox="0 0 16 14">
            <rect x="0.5" y="0.5" width="15" height="13" fill="#fff" stroke="#7c8fa3" />
            <rect x="2.5" y="2.5" width="11" height="9" fill="url(#sky)" />
            <path d="M2.500 8 L6 6.500 L13.500 9.500 V11.500 H2.500Z" fill="#2d6f78" />
          </svg>
        </button>
      </div>
      <div className="flex h-7 border-t border-[#d7d7d7] bg-[#f0f0f0] leading-[28px]">
        <span className="flex-1 pl-[2px]">Freier Speicherplatz: 353 GB, Gesamtgröße: 412 GB</span>
        <span className="my-px w-[106px] border-l border-[#d7d7d7]" />
        <span className="my-px flex w-[238px] items-center border-l border-[#d7d7d7] pl-1">
          <svg width="16" height="14" viewBox="0 0 16 14" className="mr-1">
            <path d="M0.500 5 h2 v9 h-2z" fill="#b9bcc0" stroke="#8b8d91" strokeWidth="0.5" />
            <rect x="0.8" y="6" width="1.5" height="1.5" fill="#3db32e" />
            <rect x="4" y="0.5" width="11.5" height="9.5" fill="#cfd1d6" stroke="#93969c" strokeWidth="0.6" />
            <rect x="5" y="1.5" width="9.5" height="7.5" fill="url(#navy)" />
            <path d="M8 10 h4 v2 h2 v1.500 h-8 v-1.500 h2z" fill="#a5a8ad" />
          </svg>
          Computer
          <svg width="12" height="12" viewBox="0 0 12 12" className="mr-[2px] mb-[2px] ml-auto self-end">
            <path d="M9 1h3v3h-3z M9 5h3v3h-3z M9 9h3v3h-3z M5 5h3v3h-3z M5 9h3v3h-3z M1 9h3v3h-3z" fill="#bdbdbd" />
          </svg>
        </span>
      </div>
    </footer>
  );
}

function TaskButton({ label, state = "idle", children }: { label: string; state?: "idle" | "open" | "active"; children: ReactNode }) {
  const look = {
    idle: "border-transparent",
    open: "border-[#d9bb85] bg-[#f5d9a0]/30 outline outline-[#8a6526]/60",
    active: "border-[#f7efdf] bg-[#f3e2c3]/60 outline outline-[#8a6526]/60",
  }[state];
  return (
    <button aria-label={label} className={`flex h-[45px] w-[69px] items-center justify-center border pr-[2px] ${look}`}>
      {children}
    </button>
  );
}

function RingStar() {
  return (
    <svg width="40" height="40" viewBox="0 0 40 40">
      <rect width="40" height="40" rx="5" fill="#00a8e8" />
      <circle cx="21" cy="21" r="13" fill="#fff" />
      <path d="M20 21 H5 V20 A15 15 0 0 1 20 6Z" fill="#00a8e8" />
      <path d="M19 18 H6 A13.500 13.500 0 0 1 19 6.500Z" fill="#ffa800" />
      <path d="M21 13 L23.300 18.300 L29 18.800 L24.700 22.500 L26 28 L21 25 L16 28 L17.300 22.500 L13 18.800 L18.700 18.300Z" fill="#00a8e8" />
    </svg>
  );
}

function TaskBar() {
  return (
    <div className="relative flex h-12 items-center border-t border-[#9c8658] bg-[#c0a877]">
      <svg className="absolute inset-0 h-full w-full" viewBox="0 0 1920 48" preserveAspectRatio="none" aria-hidden="true">
        <path d="M0 0 H945 L938 48 H0Z" fill="url(#taskLeft)" />
        <path d="M945 0 H1059 L1067 48 H938Z" fill="#9f7f3f" />
        <path d="M1059 0 L1067 48" stroke="#c8a55e" strokeWidth="1.5" />
        <path d="M1675 0 H1920 V48 H1790 Q1740 20 1675 0Z" fill="#c29a3c" />
        <path d="M1675 0 Q1735 18 1775 48 H1810 Q1760 12 1712 0Z" fill="#c58c25" />
      </svg>
      <div className="relative flex items-center gap-1">
        <button aria-label="Start" className="flex w-[58px] justify-center">
          <svg width="33" height="34" viewBox="0 0 33 34">
            <path d="M0 5 L14 3 V16 H0Z M15.500 2.800 L33 0 V16 H15.500Z M0 17.500 H14 V31 L0 29Z M15.500 17.500 H33 V34 L15.500 31.200Z" fill="#fff" />
          </svg>
        </button>
        <TaskButton label="Internet Explorer">
          <svg width="40" height="38" viewBox="0 0 40 38">
            <path
              d="M36 21 H14.500 C15 30 26 30 28 25.500 H35.500 C32 38 7 38 6 20 C7 3 34 1 36 21Z M14.500 16 H27.500 C27 9.500 15.500 9.500 14.500 16Z"
              fill="#4fc3f0"
              stroke="#2a93c9"
              strokeWidth="0.8"
              fillRule="evenodd"
            />
            <path d="M36 8 C38 -2 27 -1 16 8 C4 18 -1 33 5 36 C8 38 13 35 16 32 C11 34 6 34 6 29 C7 20 22 5 31 4 C34 4 36 5 36 8Z" fill="#ffcf1f" />
          </svg>
        </TaskButton>
        <TaskButton label="Chrome" state="open">
          <svg width="36" height="36" viewBox="0 0 36 36">
            <circle cx="18" cy="18" r="18" fill="#fcc934" />
            <path d="M18 18 L2.400 9 A18 18 0 0 1 33.600 9.500 H18Z" fill="#dc4437" />
            <path d="M18 18 L2.400 9 A18 18 0 0 0 17 36 L25.500 22Z" fill="#1da462" />
            <path d="M33.600 9.500 A18 18 0 0 1 17 36 L25.500 22 V9.500Z" fill="#fcc934" />
            <circle cx="18" cy="18" r="8.5" fill="#fff" />
            <circle cx="18" cy="18" r="6.5" fill="#4a80ec" />
          </svg>
        </TaskButton>
        <TaskButton label="Explorer" state="active">
          <svg width="40" height="38" viewBox="0 0 40 38">
            <path d="M5 2 H16 L18 5 H35 V12 H5Z" fill="#f3d874" stroke="#c8a53e" strokeWidth="0.7" />
            <rect x="8" y="1.5" width="7" height="3" fill="#fff" />
            <rect x="8" y="1.5" width="2.5" height="3" fill="#33a057" />
            <rect x="18" y="3.5" width="8" height="3" fill="#fff" />
            <rect x="18" y="3.5" width="2.5" height="3" fill="#d33b2b" />
            <rect x="28" y="6" width="8" height="3" fill="#fff" />
            <rect x="33" y="6" width="2.5" height="3" fill="#2f7fd0" />
            <path d="M1 8 H22 L24 10 H39 V36 H1Z" fill="#f6e08a" stroke="#d3b04a" strokeWidth="0.7" />
            <path d="M5 38 V26 Q5 22 9 22 H32 Q36 22 36 26 V38 H28 V31 H13 V38Z" fill="#9bd3ee" stroke="#4a9cc7" strokeWidth="0.8" />
          </svg>
        </TaskButton>
        <TaskButton label="Outlook">
          <svg width="37" height="36" viewBox="0 0 37 36">
            <rect x="18" y="8" width="18" height="20" fill="#fff" stroke="#0a6fc4" strokeWidth="1.5" />
            <path d="M19 10 L27 18 L36 9" fill="none" stroke="#0a6fc4" strokeWidth="2.5" />
            <path d="M0 4 L21 0 V36 L0 32Z" fill="#0a6fc4" />
            <ellipse cx="10.5" cy="18" rx="4.3" ry="5.5" fill="none" stroke="#fff" strokeWidth="3" />
          </svg>
        </TaskButton>
        <TaskButton label="CyberGhost">
          <svg width="40" height="40" viewBox="0 0 40 40">
            <circle cx="19" cy="21" r="18.5" fill="#0c1720" />
            <path d="M19 3 A18 18 0 1 0 37 23" fill="none" stroke="#36b4f0" strokeWidth="3" />
            <path d="M24 10 A12 12 0 1 0 31 25" fill="none" stroke="#2ba5e6" strokeWidth="5" />
            <circle cx="29" cy="10" r="10" fill="#d4601c" />
            <path d="M26 18 L25 24 L31 19Z" fill="#d4601c" />
            <path d="M26 5v3M31 5v3M25 13h7" stroke="#fff" strokeWidth="2" />
          </svg>
        </TaskButton>
        <TaskButton label="Systemsteuerung" state="open">
          <svg width="40" height="36" viewBox="0 0 40 36">
            <rect x="0.5" y="1" width="39" height="28" rx="1" fill="#3f9de0" stroke="#9bd0f3" />
            <circle cx="11" cy="11" r="6" fill="none" stroke="#e9f5fd" strokeWidth="1.5" />
            <path d="M11 11 V4 A7 7 0 0 1 17 13Z" fill="#f0a03c" />
            <path d="M21 8h14M21 13h14M21 18h14" stroke="#e2f2fd" strokeWidth="2.5" />
            <path d="M5 22h3M10 22h3" stroke="#f0b93c" strokeWidth="2" />
            <path d="M13 35 Q13 29 18 28 Q20 22 24 28 Q29 29 29 35Z" fill="#dedede" stroke="#8f8f8f" strokeWidth="0.8" />
          </svg>
        </TaskButton>
        <TaskButton label="Sternfenster 1" state="open">
          <RingStar />
        </TaskButton>
        <TaskButton label="Sternfenster 2" state="open">
          <RingStar />
        </TaskButton>
      </div>
      <div className="relative ml-auto flex items-center gap-[10px] pr-5 text-white">
        <button aria-label="Ausgeblendete Symbole" className="mr-1">
          <svg width="11" height="7" viewBox="0 0 11 7">
            <path d="M5.500 0.500 L10.500 6 H0.500Z" fill="#fff" stroke="#6b5a36" strokeWidth="0.6" />
          </svg>
        </button>
        <button aria-label="Windows 10 herunterladen">
          <svg width="20" height="20" viewBox="0 0 20 20">
            <path d="M0.500 2.500 L8.500 1.500 V9.500 H0.500Z M9.500 1.300 L19.500 0.500 V9.500 H9.500Z M0.500 10.500 H8.500 V18.500 L0.500 17.500Z M9.500 10.500 H19.500 V19.500 L9.500 18.700Z" fill="#fff" stroke="#5a4a2a" strokeWidth="0.6" />
          </svg>
        </button>
        <button aria-label="Wartungscenter">
          <svg width="20" height="20" viewBox="0 0 20 20">
            <path d="M1 0.500 H3.500 V19.500 H1Z" fill="#fff" stroke="#4c4026" strokeWidth="0.9" />
            <path d="M3.500 2 Q8 0 11 3 Q14 5 18 4 V11 Q14 12 11 10 Q8 8 3.500 10Z" fill="#fff" stroke="#4c4026" strokeWidth="0.9" />
            <circle cx="14" cy="14.5" r="5" fill="#d8342a" />
            <path d="M11.500 12 L16.500 17 M16.500 12 L11.500 17" stroke="#fff" strokeWidth="1.6" />
          </svg>
        </button>
        <button aria-label="Netzwerk">
          <svg width="20" height="20" viewBox="0 0 20 20">
            <path d="M6 3.500 H18 V13 H6Z M12 13 V17 M7.500 17.500 H16" fill="none" stroke="#4c4026" strokeWidth="3.4" />
            <path d="M6 3.500 H18 V13 H6Z M12 13 V17 M7.500 17.500 H16" fill="none" stroke="#fff" strokeWidth="1.8" />
            <path d="M1 1 H5 V6 H1Z M3 6 V17" fill="#8f7433" stroke="#fff" strokeWidth="1.5" />
          </svg>
        </button>
        <button aria-label="Lautstärke">
          <svg width="20" height="20" viewBox="0 0 20 20">
            <path d="M0.800 6.500 H3.500 L9.500 1 V19 L3.500 13.500 H0.800Z" fill="#fff" stroke="#4c4026" strokeWidth="0.9" />
            <path d="M12 7 Q13.800 10 12 13 M14.500 5.500 Q17 10 14.500 14.500 M17 4 Q20.500 10 17 16" fill="none" stroke="#fff" strokeWidth="1.3" />
          </svg>
        </button>
        <time className="ml-3 text-center text-sm leading-[22px]">
          10:44
          <br />
          12.12.2015
        </time>
      </div>
    </div>
  );
}

export default function App() {
  return (
    <div className="flex min-h-screen flex-col bg-white font-['Noto_Sans','Open_Sans',sans-serif] text-black">
      <IconDefs />
      <TitleBar />
      <Ribbon />
      <AddressRow />
      <ToolBar />
      <div className="flex flex-1">
        <Sidebar />
        <FileList />
      </div>
      <StatusBars />
      <TaskBar />
    </div>
  );
}
